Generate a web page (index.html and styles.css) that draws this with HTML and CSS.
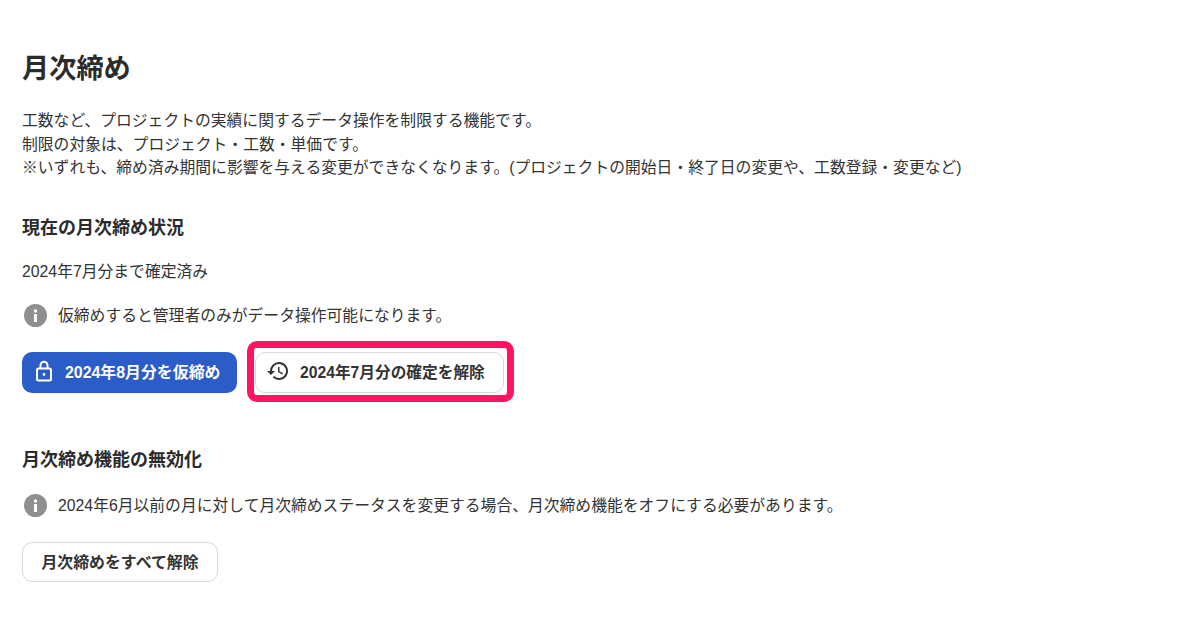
FILE: index.html
```html
<!DOCTYPE html>
<html lang="ja">
<head>
<meta charset="utf-8">
<title>月次締め</title>
<link rel="stylesheet" href="styles.css">
</head>
<body>
<main class="page">
  <h1 class="title">月次締め</h1>
  <p class="intro">工数など、プロジェクトの実績に関するデータ操作を制限する機能です。<br>制限の対象は、プロジェクト・工数・単価です。<br>※いずれも、締め済み期間に影響を与える変更ができなくなります。(プロジェクトの開始日・終了日の変更や、工数登録・変更など)</p>

  <section class="status">
    <h2 class="heading">現在の月次締め状況</h2>
    <p class="state">2024年7月分まで確定済み</p>
    <div class="note">
      <svg class="info" viewBox="0 0 24 24"><circle cx="12" cy="12" r="12" fill="#8f8f8f"/><circle cx="12" cy="7.2" r="1.8" fill="#fff"/><rect x="10.4" y="10.4" width="3.2" height="8.4" rx=".6" fill="#fff"/></svg>
      <span>仮締めすると管理者のみがデータ操作可能になります。</span>
    </div>
    <div class="actions">
      <button class="btn primary">
        <svg class="ico" viewBox="0 0 24 24" fill="none" stroke="#fff" stroke-width="2"><rect x="5" y="9.5" width="14" height="12" rx="1.5"/><path d="M8.5 9.5V6.2a3.5 3.5 0 0 1 7 0v3.3"/><circle cx="12" cy="15.5" r="1.4" fill="#fff" stroke="none"/></svg>
        <span>2024年8月分を仮締め</span>
      </button>
      <div class="highlight">
        <button class="btn outline with-icon">
          <svg class="ico" viewBox="0 0 24 24" fill="#333"><path d="M13 3a9 9 0 0 0-9 9H1l3.9 3.9.1.1L9 12H6a7 7 0 1 1 2.05 4.95l-1.42 1.42A9 9 0 1 0 13 3zm-1 5v5l4.25 2.52.77-1.28-3.52-2.09V8z"/></svg>
          <span>2024年7月分の確定を解除</span>
        </button>
      </div>
    </div>
  </section>

  <section class="disable">
    <h2 class="heading">月次締め機能の無効化</h2>
    <div class="note note-second">
      <svg class="info" viewBox="0 0 24 24"><circle cx="12" cy="12" r="12" fill="#8f8f8f"/><circle cx="12" cy="7.2" r="1.8" fill="#fff"/><rect x="10.4" y="10.4" width="3.2" height="8.4" rx=".6" fill="#fff"/></svg>
      <span>2024年6月以前の月に対して月次締めステータスを変更する場合、月次締め機能をオフにする必要があります。</span>
    </div>
    <button class="btn outline wide">月次締めをすべて解除</button>
  </section>
</main>
</body>
</html>
```
FILE: styles.css
```css
* { box-sizing: border-box; }
html, body { margin: 0; padding: 0; background: #fff; }
body {
  width: 1189px;
  height: 644px;
  overflow: hidden;
  color: #333;
  font-family: "Liberation Sans", "Noto Sans CJK JP", sans-serif;
  font-size: 15.8px;
}
.page { padding: 51px 22px 0; }
.title { margin: 0; font-size: 27.2px; line-height: 36px; font-weight: 700; color: #2b2b2b; }
.intro { margin: 22px 0 0; line-height: 23.5px; }
.heading { margin: 0; font-size: 18px; line-height: 24px; font-weight: 700; color: #2b2b2b; }
.status { margin-top: 36.5px; }
.state { margin: 20px 0 0; line-height: 24px; }
.note { display: flex; align-items: center; gap: 11px; height: 24px; margin-top: 19px; padding-left: 2px; line-height: 24px; }
.note span { padding-top: 2px; }
.note-second { margin-top: 21px; }
.info { width: 23px; height: 23px; flex: none; }
.actions { display: flex; align-items: flex-start; gap: 10px; margin-top: 14px; }
.btn {
  display: flex;
  align-items: center;
  justify-content: center;
  font-family: inherit;
  font-size: 15.9px;
  font-weight: 700;
  border-radius: 10px;
  cursor: pointer;
}
.ico { width: 24px; height: 24px; flex: none; }
.primary { width: 215px; height: 41px; margin-top: 11px; padding: 0 0 3px 10px; gap: 9px; justify-content: flex-start; background: #2b5cc8; color: #fff; border: 0; }
.highlight { padding: 4px 3px 2px 1px; border: 7px solid #ff1464; border-radius: 10px; background: #fff; }
.outline { background: #fff; color: #333; border: 1px solid #d9d9dc; }
.with-icon { width: 249px; height: 41px; padding: 0 0 3px 10px; gap: 10px; justify-content: flex-start; }
.with-icon span { font-size: 15.7px; }
.disable { margin-top: 46px; }
.wide { width: 196px; height: 40px; margin-top: 25px; padding: 0 0 2px; }
```
